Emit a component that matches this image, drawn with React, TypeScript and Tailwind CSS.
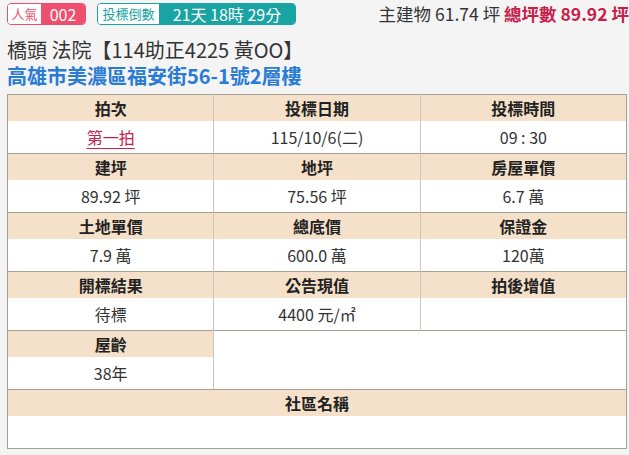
import React from "react";

const font = { fontFamily: '"Noto Sans CJK TC", "Noto Sans", sans-serif' };

const groups = [
  { heads: ["拍次", "投標日期", "投標時間"], vals: ["第一拍", "115/10/6(二)", "09 : 30"] },
  { heads: ["建坪", "地坪", "房屋單價"], vals: ["89.92 坪", "75.56 坪", "6.7 萬"] },
  { heads: ["土地單價", "總底價", "保證金"], vals: ["7.9 萬", "600.0 萬", "120萬"] },
  { heads: ["開標結果", "公告現值", "拍後增值"], vals: ["待標", "4400 元/㎡", ""] },
];

const th = "h-[26px] bg-[#f5e1c9] text-[16px] font-bold text-[#222] text-center border-r border-[#cfc6ba] last:border-r-0 p-0 leading-none";
const td = "h-[33px] bg-white text-[16px] text-[#333] text-center border-r border-[#cfc6ba] last:border-r-0 p-0 leading-none";

const App = () => {
  return (
    <div className="w-[629px] h-[455px] bg-[#f4f4f4] overflow-hidden" style={font}>
      <div className="flex items-start justify-between pl-[7px] pt-[3px]">
        <div className="flex gap-[11px]">
          <div className="flex h-[22px] rounded-[4px] border border-[#ef4f6e] overflow-hidden">
            <span className="w-[33px] bg-white text-[#ef4f6e] text-[13px] flex items-center justify-center">人氣</span>
            <span className="w-[44px] bg-[#ef4f6e] text-white text-[16px] flex items-center justify-center">002</span>
          </div>
          <div className="flex h-[22px] rounded-[4px] border border-[#19a3a3] overflow-hidden">
            <span className="w-[61px] bg-white text-[#19a3a3] text-[13px] flex items-center justify-center">投標倒數</span>
            <span className="w-[136px] bg-[#19a3a3] text-white text-[16px] flex items-center justify-center">21天 18時 29分</span>
          </div>
        </div>
        <div className="text-[17.5px] leading-[22px] whitespace-nowrap">
          <span className="text-[#333]">主建物 61.74 坪 </span>
          <span className="text-[#c7204b] font-bold">總坪數 89.92 坪</span>
        </div>
      </div>
      <div className="pl-[7px] mt-[12px] flex flex-col">
        <div className="text-[20px] leading-[26px] text-[#333]">橋頭 法院【114助正4225 黃OO】</div>
        <div className="text-[20px] leading-[26px] text-[#2a7bd4] font-bold">高雄市美濃區福安街56-1號2層樓</div>
      </div>
      <div className="pl-[7px] mt-[5px]">
        <table className="w-[620px] table-fixed border-collapse border border-[#a49e93]">
          <tbody>
            {groups.map((g, i) => (
              <React.Fragment key={i}>
                <tr>
                  {g.heads.map((h) => (
                    <th key={h} className={th}>{h}</th>
                  ))}
                </tr>
                <tr className="border-b border-[#a49e93]">
                  {g.vals.map((v, j) => (
                    <td key={j} className={td}>
                      {i === 0 && j === 0 ? (
                        <span className="text-[#c7204b] underline underline-offset-4">{v}</span>
                      ) : (
                        v
                      )}
                    </td>
                  ))}
                </tr>
              </React.Fragment>
            ))}
            <tr>
              <th className={th}>屋齡</th>
              <td colSpan={2} rowSpan={2} className="bg-white border-l border-[#cfc6ba] border-b border-b-[#a49e93]"></td>
            </tr>
            <tr className="border-b border-[#a49e93]">
              <td className={td + " border-r-[#cfc6ba]"}>38年</td>
            </tr>
            <tr>
              <th colSpan={3} className={th}>社區名稱</th>
            </tr>
            <tr>
              <td colSpan={3} className={td}></td>
            </tr>
          </tbody>
        </table>
      </div>
    </div>
  );
};

export default App;
